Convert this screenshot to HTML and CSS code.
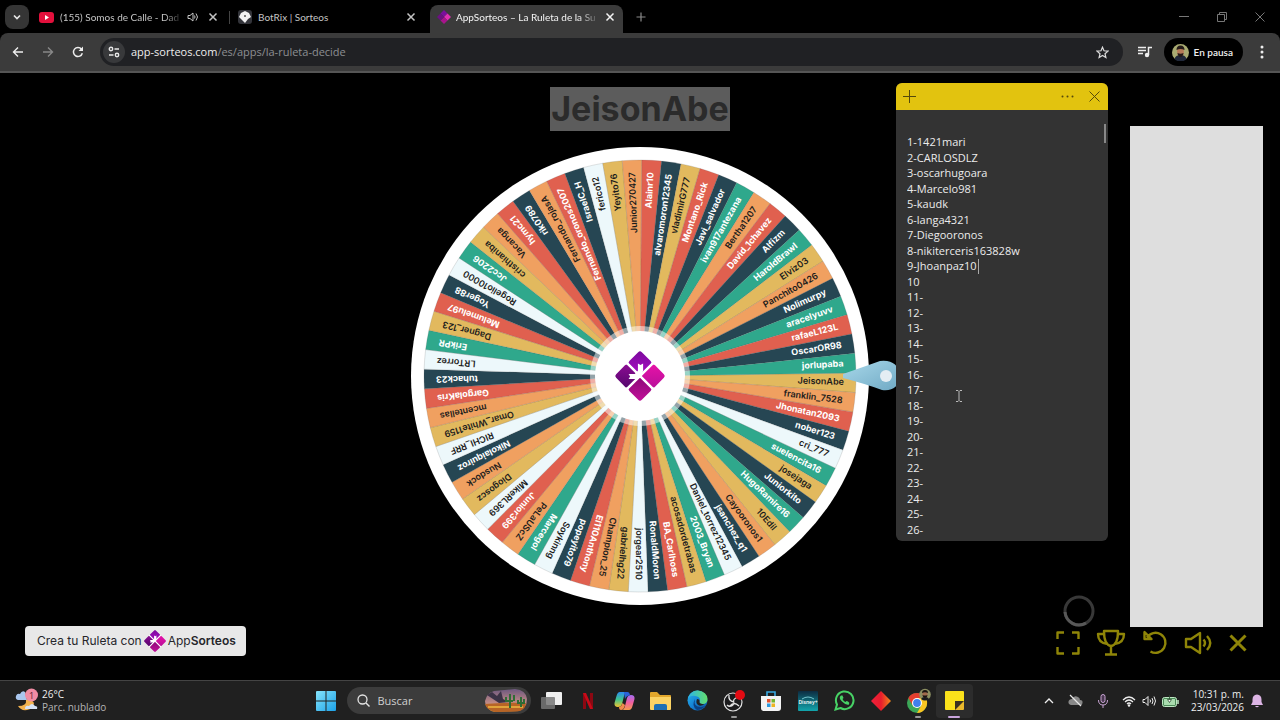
FILE: index.html
```html
<!DOCTYPE html>
<html lang="es">
<head>
<meta charset="utf-8">
<title>AppSorteos – La Ruleta de la Suerte</title>
<link rel="stylesheet" href="styles.css">
</head>
<body>
<svg class="defs" aria-hidden="true">
  <defs>
    <linearGradient id="lg-top" x1="0" y1="0" x2="1" y2="1"><stop offset="0" stop-color="#7a0a9c"/><stop offset="1" stop-color="#a90cc4"/></linearGradient>
    <linearGradient id="lg-right" x1="0" y1="0" x2="1" y2="1"><stop offset="0" stop-color="#e812a8"/><stop offset="1" stop-color="#b8109a"/></linearGradient>
    <linearGradient id="lg-bot" x1="0" y1="0" x2="1" y2="1"><stop offset="0" stop-color="#8a0a78"/><stop offset="1" stop-color="#c4109a"/></linearGradient>
    <linearGradient id="lg-left" x1="0" y1="0" x2="1" y2="1"><stop offset="0" stop-color="#8d0c94"/><stop offset="1" stop-color="#54076c"/></linearGradient>
    <linearGradient id="win" x1="0" y1="0" x2="1" y2="1"><stop offset="0" stop-color="#86e4fb"/><stop offset="1" stop-color="#1ba1e8"/></linearGradient>
    <linearGradient id="edge" x1="0" y1="0" x2="1" y2="1"><stop offset="0" stop-color="#2ab6ea"/><stop offset=".5" stop-color="#1583d6"/><stop offset="1" stop-color="#0d4f9c"/></linearGradient>
    <linearGradient id="edge2" x1="0" y1="0" x2="1" y2="0"><stop offset="0" stop-color="#2cb4e8"/><stop offset="1" stop-color="#63df6c"/></linearGradient>
    <linearGradient id="cop1" x1="0" y1="0" x2="0" y2="1"><stop offset="0" stop-color="#2b8cf0"/><stop offset=".5" stop-color="#3fc48d"/><stop offset="1" stop-color="#f2c230"/></linearGradient>
    <linearGradient id="cop2" x1="0" y1="0" x2="0" y2="1"><stop offset="0" stop-color="#a46cf2"/><stop offset=".5" stop-color="#f05fa0"/><stop offset="1" stop-color="#f59a4c"/></linearGradient>
    <linearGradient id="disney" x1="0" y1="0" x2="0" y2="1"><stop offset="0" stop-color="#0d2c42"/><stop offset="1" stop-color="#12a5ac"/></linearGradient>
    <linearGradient id="redd" x1="0" y1="0" x2="1" y2="0"><stop offset="0" stop-color="#f0213c"/><stop offset=".5" stop-color="#e81c2c"/><stop offset="1" stop-color="#f08a1c"/></linearGradient>
    <linearGradient id="dusk" x1="0" y1="0" x2="0" y2="1"><stop offset="0" stop-color="#6d587f"/><stop offset=".6" stop-color="#c08a86"/><stop offset="1" stop-color="#d79638"/></linearGradient>
    <linearGradient id="ptr" x1="0" y1="0" x2="1" y2="1"><stop offset="0" stop-color="#a9d8ea"/><stop offset="1" stop-color="#6fa9c4"/></linearGradient>
    <symbol id="logo" viewBox="-26 -26 52 52">
      <g transform="rotate(45)">
        <rect x="-17.500" y="-17.500" width="17" height="17" rx="2.500" fill="url(#lg-top)"/>
        <rect x=".500" y="-17.500" width="17" height="17" rx="2.500" fill="url(#lg-right)"/>
        <rect x=".500" y=".500" width="17" height="17" rx="2.500" fill="url(#lg-bot)"/>
        <rect x="-17.500" y=".500" width="17" height="17" rx="2.500" fill="url(#lg-left)"/>
      </g>
      <path d="M-12.500-12.500 12.500 12.500M-12.500 12.500 12.500-12.500" stroke="#fff" stroke-width="2.400"/>
      <path d="M-2-12 .500-10.500 3-12V-5L1 0-4 3H-11L-9.500 .500-11-2H-5L-2-5Z" fill="#fff"/>
    </symbol>
    <symbol id="x" viewBox="0 0 10 10"><path d="M1.500 1.500 8.500 8.500M8.500 1.500 1.500 8.500" fill="none" stroke="currentColor" stroke-width="1.500"/></symbol>
  </defs>
</svg>

<header class="tabs">
  <button class="tab-menu" aria-label="Buscar pestañas"><svg width="10" height="10" viewBox="0 0 10 10"><path d="M2 3.500 5 6.500 8 3.500" fill="none" stroke="#e6e6e6" stroke-width="1.700"/></svg></button>
  <div class="tab tab-first">
    <svg width="15" height="11" viewBox="0 0 15 11"><rect width="15" height="11" rx="3" fill="#e3103c"/><path d="M6 3v5l4-2.500z" fill="#fff"/></svg>
    <span class="tab-title">(155) Somos de Calle - Dad</span>
    <button class="ico" aria-label="Silenciar"><svg width="12" height="12" viewBox="0 0 12 12"><path d="M1 4.500h2l3-2.500v8l-3-2.500H1z" fill="none" stroke="currentColor"/><path d="M7.500 4.500q1 1.500 0 3M9 2.500q3 3.500 0 7" fill="none" stroke="currentColor"/></svg></button>
    <button class="ico" aria-label="Cerrar"><svg width="10" height="10"><use href="#x"/></svg></button>
  </div>
  <div class="tab tab-second">
    <svg width="14" height="14" viewBox="0 0 14 14"><rect width="14" height="14" rx="3" fill="#33343a"/><path d="M3 3 7 1l4 2 2 4-3 2-3 4-4-4-2-2z" fill="#f3f3f3"/><circle cx="7" cy="6" r="1" fill="#555"/></svg>
    <span class="tab-title">BotRix | Sorteos</span>
    <button class="ico" aria-label="Cerrar"><svg width="10" height="10"><use href="#x"/></svg></button>
  </div>
  <div class="tab tab-active">
    <svg width="14" height="14" viewBox="0 0 14 14"><path d="M7 0l3.500 3.500L7 7 3.500 3.500z" fill="#7a0f9c"/><path d="M10.500 3.500 14 7l-3.500 3.500L7 7z" fill="#df30b4"/><path d="M7 7l3.500 3.500L7 14l-3.500-3.500z" fill="#a8148c"/><path d="M3.500 3.500 7 7l-3.500 3.500L0 7z" fill="#6d1083"/></svg>
    <span class="tab-title">AppSorteos – La Ruleta de la Su</span>
    <button class="ico" aria-label="Cerrar"><svg width="10" height="10"><use href="#x"/></svg></button>
  </div>
  <button class="ico new-tab" aria-label="Nueva pestaña"><svg width="10" height="10" viewBox="0 0 10 10"><path d="M5 .500v9M.500 5h9" stroke="#8a8a8a" stroke-width="1.200"/></svg></button>
  <div class="window-buttons">
    <button class="ico" aria-label="Minimizar"><svg width="10" height="10" viewBox="0 0 10 10"><path d="M0 4.500h10" stroke="#777"/></svg></button>
    <button class="ico" aria-label="Restaurar"><svg width="10" height="10" viewBox="0 0 10 10"><path d="M.500 2.500h7v7h-7zM2.500 2V.500h7v7H8" fill="none" stroke="#777"/></svg></button>
    <button class="ico" aria-label="Cerrar ventana"><svg width="10" height="10" viewBox="0 0 10 10"><path d="M.500.500l9 9M9.500.500l-9 9" stroke="#777"/></svg></button>
  </div>
</header>

<nav class="toolbar">
  <button class="ico nav" aria-label="Atrás"><svg width="12" height="12" viewBox="0 0 12 12"><path d="M11 6H2M6 1.500 1.500 6 6 10.500" fill="none" stroke="#eee" stroke-width="1.400"/></svg></button>
  <button class="ico nav" aria-label="Adelante"><svg width="12" height="12" viewBox="0 0 12 12"><path d="M1 6h9M6 1.500 10.500 6 6 10.500" fill="none" stroke="#888" stroke-width="1.400"/></svg></button>
  <button class="ico nav" aria-label="Recargar"><svg width="12" height="12" viewBox="0 0 12 12"><path d="M10.300 7.200A4.500 4.500 0 1 1 9.500 3.200" fill="none" stroke="#eee" stroke-width="1.500"/><path d="M11 .500V5H6.500z" fill="#eee"/></svg></button>
  <div class="omnibox">
    <button class="site-info" aria-label="Información del sitio"><svg width="12" height="12" viewBox="0 0 12 12"><g fill="none" stroke="#e8e8e8" stroke-width="1.400"><circle cx="3" cy="3" r="1.700"/><path d="M6.500 3H11M1 9h4.500"/><circle cx="9" cy="9" r="1.700"/></g></svg></button>
    <a class="url" href="#"><b>app-sorteos.com</b>/es/apps/la-ruleta-decide</a>
    <button class="ico" aria-label="Favorito"><svg width="13" height="13" viewBox="0 0 13 13"><path d="M6.500 1.200 8 4.800l4 .300-3 2.600.900 3.900-3.400-2.100-3.400 2.100.900-3.900-3-2.600 4-.300z" fill="none" stroke="#ddd" stroke-width="1.200"/></svg></button>
  </div>
  <button class="ico media" aria-label="Multimedia"><svg width="14" height="12" viewBox="0 0 14 12"><path d="M0 1.500h8M0 4.500h8M0 7.500h5" stroke="#eee" stroke-width="1.500"/><path d="M10.500 9V1.500H14" fill="none" stroke="#eee" stroke-width="1.500"/><circle cx="9" cy="9" r="2.200" fill="#eee"/></svg></button>
  <button class="profile"><svg width="17" height="17" viewBox="0 0 17 17"><circle cx="8.500" cy="8.500" r="8.500" fill="#a9ab72"/><path d="M2.500 15q1-4 6-4t6 4a8.500 8.500 0 0 1-12 0" fill="#20283a"/><ellipse cx="8.500" cy="7.500" rx="3.400" ry="4.500" fill="#b57a58"/><path d="M4.500 6q0-4.500 4-4.500T12.500 6q-4-2-8 0M5.500 9q3 1.500 6 0-.500 4-3 4t-3-4" fill="#241a18"/></svg>En pausa</button>
  <button class="ico dots" aria-label="Menú"><svg width="4" height="14" viewBox="0 0 4 14" fill="#eee"><circle cx="2" cy="2" r="1.500"/><circle cx="2" cy="7" r="1.500"/><circle cx="2" cy="12" r="1.500"/></svg></button>
</nav>

<main class="stage">
  <div class="side-left">
    <a class="brand" href="#"><span>Crea tu Ruleta con</span><svg width="24" height="24"><use href="#logo"/></svg><span>App<b>Sorteos</b></span></a>
  </div>
  <section class="center">
    <h1>JeisonAbe</h1>
    <svg class="wheel" viewBox="-230 -230 460 460" role="img" aria-label="Ruleta">
      <circle r="229" fill="#fff"/>
      <g id="slices"></g>
      <circle r="47" fill="none" stroke="#fff" stroke-opacity=".5" stroke-width="6"/>
      <circle r="45" fill="#fff"/>
      <use href="#logo" x="-27" y="-27" width="54" height="54"/>
      <path d="M203-2Q226-10 240-15Q258-17 260 0Q258 16 242 14Q226 8 203 2Z" fill="url(#ptr)"/>
      <circle cx="246" cy="0" r="6" fill="#e4edf3"/>
    </svg>
  </section>
  <aside class="side-right">
    <div class="panel-row">
      <svg width="32" height="32" viewBox="0 0 32 32"><circle cx="16" cy="16" r="14" fill="none" stroke="#383838" stroke-width="3"/><path d="M2 17A14 14 0 0 0 23 28" fill="none" stroke="#585858" stroke-width="3"/></svg>
      <div class="blank-panel"></div>
    </div>
    <div class="tools">
      <button class="ico" aria-label="Pantalla completa"><svg width="24" height="24" viewBox="0 0 24 24"><path d="M1.500 8V1.500H8M16 1.500h6.500V8M22.500 16v6.500H16M8 22.500H1.500V16" /></svg></button>
      <button class="ico" aria-label="Ganadores"><svg width="30" height="28" viewBox="0 0 30 28"><path d="M8 2h14q0 14-7 15Q8 16 8 2zM15 17v8M9 25.500h12M8 5H2q0 9 9.500 10M22 5h6q0 9-9.500 10"/></svg></button>
      <button class="ico" aria-label="Reiniciar"><svg width="26" height="26" viewBox="0 0 26 26"><path d="M8.500 21.500A10 10 0 1 0 5 7.500M2.500 2v7h7zM3 9l5-1"/></svg></button>
      <button class="ico" aria-label="Sonido"><svg width="28" height="24" viewBox="0 0 28 24"><path d="M2 8h5l9-6v20l-9-6H2zM19.500 8.500q3 3.500 0 7M23 5q6.500 7 0 14"/></svg></button>
      <button class="ico" aria-label="Cerrar ruleta"><svg class="bold" width="20" height="20" viewBox="0 0 20 20"><path d="M2.500 2.500l15 15M17.500 2.500l-15 15"/></svg></button>
    </div>
  </aside>

  <div class="note">
    <div class="note-bar">
      <button class="ico" aria-label="Nueva nota"><svg width="13" height="13" viewBox="0 0 13 13"><path d="M6.500 0v13M0 6.500h13" stroke="#54490c"/></svg></button>
      <button class="ico note-menu" aria-label="Menú de nota"><svg width="13" height="3" viewBox="0 0 13 3" fill="#54490c"><circle cx="1.500" cy="1.500" r="1"/><circle cx="6.500" cy="1.500" r="1"/><circle cx="11.500" cy="1.500" r="1"/></svg></button>
      <button class="ico" aria-label="Cerrar nota"><svg width="11" height="11" viewBox="0 0 11 11"><path d="M.500.500l10 10M10.500.500l-10 10" stroke="#54490c"/></svg></button>
    </div>
    <textarea class="note-text" aria-label="Nota" spellcheck="false">1-1421mari
2-CARLOSDLZ
3-oscarhugoara
4-Marcelo981
5-kaudk
6-langa4321
7-Diegooronos
8-nikiterceris163828w
9-Jhoanpaz10
10
11-
12-
13-
14-
15-
16-
17-
18-
19-
20-
21-
22-
23-
24-
25-
26-</textarea>
    <span class="note-scroll"></span>
    <span class="note-caret"></span>
    <svg class="cursor" width="8" height="12" viewBox="0 0 8 12"><path d="M1 .500h2l1 1 1-1h2M1 11.500h2l1-1 1 1h2M4 1.500v9" fill="none" stroke="#bbb"/></svg>
  </div>
</main>

<footer class="taskbar">
  <button class="weather">
    <svg width="24" height="26" viewBox="0 0 24 26"><path d="M3 12q-3-1-2-4t4-2q2-4 5-2l2 8z" fill="#a9c6ee"/><path d="M11 12q1 6-8 6 3 5 9 4t7-7q-3-5-8-3" fill="#f2b24e"/><path d="M10 21q0-4 4-3 3-4 6 0 3 0 2 3z" fill="#d5e2f4"/><circle cx="16.500" cy="7" r="6.500" fill="#f08ca4"/><text x="16.500" y="10.500" class="badge-num">1</text></svg>
    <span class="weather-text"><span>26°C</span><span>Parc. nublado</span></span>
  </button>
  <div class="task-center">
    <button class="start" aria-label="Inicio"><svg width="20" height="20" viewBox="0 0 20 20" fill="url(#win)"><path d="M0 1q0-1 1-1h8.500v9.500H0zM10.500 0H19q1 0 1 1v8.500h-9.500zM0 10.500h9.500V20H1q-1 0-1-1zM10.500 10.500H20V19q0 1-1 1h-8.500z"/></svg></button>
    <label class="search">
      <svg width="13" height="13" viewBox="0 0 13 13"><circle cx="5.500" cy="5.500" r="4.500" fill="none" stroke="#e4e4e4" stroke-width="1.300"/><path d="M9 9l3.500 3.500" stroke="#e4e4e4" stroke-width="1.400"/></svg>
      <input type="text" placeholder="Buscar" aria-label="Buscar">
      <svg width="42" height="23" viewBox="0 0 42 23"><path d="M9 2 30 0q11 1 12 10 0 10-10 12L10 23Q0 21 0 12 2 4 9 2z" fill="url(#dusk)"/><path d="M2 6l5-3 5 4 4-5 2 8 6 3-10 1z" fill="#3b3246"/><path d="M0 15q20-2 41-1-1 8-9 8.500L10 23Q2 21 0 15" fill="#b76426"/><path d="M3 18h35" stroke="#e0a33a" stroke-width="2"/><path d="M25 19V5M21 8v4h7M29 6v6M36 18V8M33 11v3h6v-4" fill="none" stroke="#2f6b35" stroke-width="2"/></svg>
    </label>
    <div class="apps">
      <button aria-label="Vista de tareas"><svg width="22" height="20" viewBox="0 0 22 20"><rect x="6" y="1" width="16" height="13" rx="1" fill="#efefef"/><rect x="1" y="6" width="14" height="12" rx="1" fill="#777" fill-opacity=".85"/></svg></button>
      <button aria-label="Netflix"><svg width="10" height="16" viewBox="0 0 10 16"><path d="M0 0h3v16H0zM7 0h3v16H7z" fill="#8c0812"/><path d="M0 0h3l7 16H7z" fill="#c80a18"/></svg></button>
      <button aria-label="Copilot"><svg width="21" height="20" viewBox="0 0 21 20"><path d="M6 1h7q-2 0-3 4L8 13q-1 3-4 3-4 0-3.500-4l2-7Q3.500 1 6 1" fill="url(#cop1)"/><path d="M15 19H8q2 0 3-4l2-8q1-3 4-3 4 0 3.500 4l-2 7q-1 4-3.500 4" fill="url(#cop2)"/><path d="M10 1h3.500q2 0 2.500 3.200-4 .800-5 3.800z" fill="#2a62d8"/><path d="M5 16q3-1 3.500-4L11 14q-1 5-4 5-2 0-2-3" fill="#f08a4c"/></svg></button>
      <button aria-label="Explorador"><svg width="22" height="20" viewBox="0 0 22 20"><path d="M0 2q0-1 1-1h6l3 3h10q1 0 1 1v13H0z" fill="#e2a72c"/><path d="M0 6h21v12q0 1-1 1H1q-1 0-1-1z" fill="#fbd364"/><path d="M4 15q0-2 2-2h9q2 0 2 2v4H4z" fill="#1d70b4"/></svg></button>
      <button aria-label="Edge"><svg width="21" height="21" viewBox="0 0 21 21"><circle cx="10.500" cy="10.500" r="10" fill="url(#edge)"/><path d="M1 8Q4 0 11 .500q9 1 9.500 8.500 0 5-5 5-4 0-3-2 2-5-4-6Q4 5 1 8" fill="url(#edge2)"/><path d="M8 9q-2 8 6 8 3 0 5-2-4 5-9 5-6-4-2-11" fill="#0b4184"/><path d="M10 9q3 0 2.500 3 0 2 5 2.300-4 2.700-7 .200-2-2-.500-5.500" fill="#232323"/></svg></button>
      <button class="running" aria-label="OBS"><svg width="24" height="22" viewBox="0 0 24 22"><circle cx="11" cy="12" r="9" fill="#1c1c1e" stroke="#e2e2e2" stroke-width="1.200"/><path d="M7 5q-1 6 5 7M16 7q-6 2-4 6M17 16q-5-5-9 0M5 15q3 3 7-1" fill="none" stroke="#e2e2e2" stroke-width="1.300"/><circle cx="18" cy="5" r="5" fill="#e30b13"/></svg></button>
      <button aria-label="Store"><svg width="20" height="22" viewBox="0 0 20 22"><path d="M6 7V2h8v5" fill="none" stroke="#37a8e0" stroke-width="1.600"/><path d="M0 6h20v12q0 3-3 3H3q-3 0-3-3z" fill="#f4f4f4"/><path d="M6 9h3.500v3.500H6z" fill="#e4502c"/><path d="M10.500 9H14v3.500h-3.500z" fill="#72b52e"/><path d="M6 13.500h3.500V17H6z" fill="#2c9be0"/><path d="M10.500 13.500H14V17h-3.500z" fill="#eeb420"/></svg></button>
      <button aria-label="Disney+"><svg width="20" height="20" viewBox="0 0 20 20"><rect width="20" height="20" rx="1" fill="url(#disney)"/><path d="M4 8q6-4 12 0" fill="none" stroke="#8fdfe8" stroke-width=".800"/><text x="10" y="13" class="disney-text">Disney+</text></svg></button>
      <button aria-label="WhatsApp"><svg width="21" height="21" viewBox="0 0 21 21"><path d="M1.500 19.500 3 14.500A8.800 8.800 0 1 1 6.500 18z" fill="none" stroke="#47d265" stroke-width="2"/><path d="M7 5.500q-3 2 1 6t7 3q1-2-1-3l-1.500-.500-1 1q-2-.500-3-3l1-1L8.500 5.500z" fill="#47d265"/></svg></button>
      <button aria-label="AnyDesk"><svg width="20" height="20" viewBox="0 0 20 20"><path d="M10 0 20 10 10 20 0 10z" fill="url(#redd)"/></svg></button>
      <button class="running" aria-label="Chrome"><svg width="26" height="26" viewBox="0 0 26 26"><circle cx="12" cy="15" r="10" fill="#3ba757"/><path d="M3.300 10A10 10 0 0 1 20.700 10H12L7.700 17.500z" fill="#e33e30"/><path d="M20.700 10A10 10 0 0 1 12 25l4.300-7.500L12 10z" fill="#f9c521"/><circle cx="12" cy="15" r="5" fill="#fff"/><circle cx="12" cy="15" r="3.900" fill="#3f80ee"/><circle cx="20" cy="6.500" r="5.800" fill="#8c8f62"/><path d="M16 11q1-2 4-2t4 2q-4 3-8 0" fill="#1a1a1e"/><ellipse cx="20" cy="6" rx="2.600" ry="3.400" fill="#a0694c"/><path d="M17 5q0-3 3-3t3 3q-3-1.500-6 0M17.500 7q2.500 1 5 0-.500 3-2.500 3t-2.500-3" fill="#1a1412"/></svg></button>
      <button class="running current" aria-label="Notas rápidas"><svg width="19" height="19" viewBox="0 0 19 19"><path d="M1 0h17q1 0 1 1v9l-9 9H1q-1 0-1-1V1q0-1 1-1" fill="#fbe21b"/><path d="M10 10h9v8q0 1-1 1h-8z" fill="#3a3220"/><path d="M19 10v8q0 1-1 1h-8z" fill="#eab92c"/></svg></button>
    </div>
  </div>
  <div class="tray">
    <button class="ico" aria-label="Mostrar ocultos"><svg width="10" height="10" viewBox="0 0 10 10"><path d="M1 7l4-4 4 4" fill="none" stroke="#eee" stroke-width="1.300"/></svg></button>
    <button class="ico" aria-label="OneDrive"><svg width="15" height="13" viewBox="0 0 15 13"><path d="M3 11q-3-1-2.500-3.500T4 5q2-4 6-2 2 1 2 3 3 0 2.500 3T12 11z" fill="#888"/><path d="M2 1l11 11" stroke="#e6e6e6" stroke-width="1.200"/></svg></button>
    <button class="ico mic" aria-label="Micrófono"><svg width="10" height="14" viewBox="0 0 10 14"><rect x="3" y=".500" width="4" height="8" rx="2" fill="#4a3850" stroke="#c9a4d4"/><path d="M.500 6q0 5 4.500 5t4.500-5M5 11v3" fill="none" stroke="#c9a4d4"/></svg></button>
    <button class="status" aria-label="Red, volumen y batería">
      <svg width="14" height="12" viewBox="0 0 14 12"><path d="M1 5q6-6 12 0M3 7q4-4 8 0M5 9q2-2 4 0" fill="none" stroke="#eee" stroke-width="1.200"/><circle cx="7" cy="10.500" r="1.200" fill="#eee"/></svg>
      <svg width="14" height="12" viewBox="0 0 14 12"><path d="M1 4.500h2l3-3v9l-3-3H1z" fill="none" stroke="#eee"/><path d="M8 4.500q1 1.500 0 3M10 3q2 3 0 6M12 1.500q3 4.500 0 9" fill="none" stroke="#eee"/></svg>
      <svg width="17" height="12" viewBox="0 0 17 12"><rect x=".500" y="2.500" width="14" height="9" rx="2" fill="#4c8a58" stroke="#bfe8c4"/><rect x="2" y="4" width="11" height="6" fill="#a9dcae"/><path d="M16 5v4" stroke="#bfe8c4" stroke-width="1.500"/><path d="M7.500 0v4M5.500 4.500h4l-2 3z" fill="#fff" stroke="#29492e" stroke-width=".800"/></svg>
    </button>
    <time class="clock"><span>10:31 p. m.</span><span>23/03/2026</span></time>
    <button class="ico" aria-label="Notificaciones"><svg width="12" height="14" viewBox="0 0 12 14"><path d="M6 .500q4.500.500 4.500 5V8l1.500 3H0l1.500-3V5.500Q1.500 1 6 .500M4 12h4q-2 2.500-4 0" fill="#dcb4e4"/></svg></button>
  </div>
</footer>
<script src="wheel.js"></script>
</body>
</html>
```

FILE: styles.css
```css
* { box-sizing: border-box; }
html, body { height: 100%; }
body {
  margin: 0;
  display: flex;
  flex-direction: column;
  overflow: hidden;
  background: #000;
  color: #e4e4e4;
  font: 11px/16px "Open Sans", "Noto Sans", sans-serif;
}
button {
  margin: 0;
  padding: 0;
  border: 0;
  background: none;
  color: inherit;
  font: inherit;
  display: flex;
  align-items: center;
  justify-content: center;
}
svg { display: block; flex: none; }
a { color: inherit; text-decoration: none; }
.defs { position: absolute; width: 0; height: 0; }
.ico { flex: none; width: 20px; height: 20px; }

/* tab strip */
.tabs { display: flex; align-items: center; height: 33px; flex: none; padding-left: 5px; font-family: Lato, "Open Sans", sans-serif; font-size: 10px; }
.tab-menu { width: 24px; height: 24px; border-radius: 8px; background: #353535; }
.tab { display: flex; align-items: center; height: 28px; align-self: flex-end; padding-bottom: 4px; color: #c4c4c4; }
.tab-title { flex: 1; min-width: 0; margin-left: 6px; white-space: nowrap; }
.tab-first .tab-title, .tab-active .tab-title {
  -webkit-mask-image: linear-gradient(90deg, #000 85%, transparent);
  mask-image: linear-gradient(90deg, #000 85%, transparent);
}
.tab-first { width: 184px; margin-left: 10px; }
.tab-second { width: 192px; margin-left: 15px; padding-right: 9px; position: relative; }
.tab-second::before { content: ""; position: absolute; left: -9px; top: 6px; width: 1px; height: 13px; background: #444; }
.tab-active {
  width: 193px;
  padding: 0 3px 4px 7px;
  border-radius: 8px 8px 0 0;
  background: #3b3b3b;
  color: #f4f4f4;
}
.tab-active .tab-title { margin-left: 5px; }
.new-tab { margin-left: 8px; }
.window-buttons { display: flex; gap: 18px; margin-left: auto; padding-right: 10px; }

/* address bar */
.toolbar {
  display: flex;
  align-items: center;
  flex: none;
  height: 40px;
  padding: 0 8px;
  background: #3b3b3b;
  border-bottom: 2px solid #555;
  border-radius: 8px 8px 0 0;
}
.nav { margin-right: 10px; }
.omnibox {
  flex: 1;
  display: flex;
  align-items: center;
  height: 28px;
  margin-left: 2px;
  padding: 0 10px 0 3px;
  border-radius: 14px;
  background: #202124;
}
.site-info { width: 22px; height: 22px; border-radius: 50%; background: #38393b; }
.url { flex: 1; margin-left: 6px; color: #8d8f92; }
.url b { color: #eee; font-weight: 400; }
.media { margin: 0 9px 0 12px; }
.profile { height: 28px; padding: 0 10px 0 8px; gap: 5px; border-radius: 14px; background: #000; color: #f0f0f0; font-family: Lato, "Open Sans", sans-serif; font-size: 10px; font-weight: 600; }
.dots { margin-left: 9px; }

/* wheel page */
.stage {
  position: relative;
  flex: 1;
  min-height: 0;
  display: grid;
  grid-template-columns: 1fr auto 1fr;
}
.side-left { display: flex; align-items: flex-end; padding: 0 0 24px 25px; }
.brand {
  display: flex;
  align-items: center;
  height: 30px;
  padding: 0 10px 0 12px;
  gap: 1px;
  border-radius: 4px;
  background: #e8e8e8;
  color: #26262b;
  font-family: Inter, sans-serif;
  font-size: 12px;
}
.brand b { font-weight: 600; }
.center { display: flex; flex-direction: column; align-items: center; padding-top: 14px; }
h1 {
  margin: 0 0 15px;
  padding: 0 1px;
  background: #5c5c5c;
  color: #2b2b2b;
  font: 700 34px/44px Inter, sans-serif;
}
.wheel { width: 460px; height: 460px; overflow: visible; }
.wheel text { font-family: Inter, sans-serif; font-size: 9px; text-anchor: end; dominant-baseline: central; }
.on-dark { fill: #fff; font-weight: 700; }
.on-light { fill: #1c1c1c; font-weight: 600; }
.side-right { display: flex; flex-direction: column; align-items: flex-end; padding: 53px 17px 22px 0; }
.panel-row { flex: 1; display: flex; align-items: flex-end; gap: 35px; }
.blank-panel { align-self: stretch; width: 133px; background: #dedede; }
.tools { display: flex; align-items: center; gap: 16px; height: 31px; margin-right: 15px; }
.tools .ico { width: auto; height: 28px; }
.tools path { fill: none; stroke: #8f8508; stroke-width: 2.4; stroke-linejoin: round; }
.tools .bold path { stroke-width: 3; }

/* sticky note window */
.note {
  position: absolute;
  left: 70%;
  top: 10px;
  width: 212px;
  height: 458px;
  display: flex;
  flex-direction: column;
  border-radius: 6px;
  overflow: hidden;
  background: #333;
}
.note-bar { display: flex; align-items: center; height: 27px; padding: 0 4px 0 3px; background: #e2c30f; }
.note-menu { margin: 0 7px 0 auto; }
.note-text {
  flex: 1;
  margin: 24px 10px 6px 11px;
  padding: 0;
  border: 0;
  outline: 0;
  resize: none;
  overflow: hidden;
  background: none;
  color: #ececec;
  font: 11px/1.41 "Open Sans", "Noto Sans", sans-serif;
}
.note-scroll { position: absolute; right: 2px; top: 41px; width: 2px; height: 19px; background: #888; }
.note-caret { position: absolute; left: 82px; top: 176px; width: 1px; height: 15px; background: #aaa; }
.cursor { position: absolute; left: 59px; top: 307px; }

/* taskbar */
.taskbar {
  display: grid;
  grid-template-columns: 1fr auto 1fr;
  align-items: center;
  flex: none;
  height: 40px;
  background: #202020;
  border-top: 1px solid #444;
}
.weather { justify-self: start; padding-left: 15px; gap: 3px; }
.weather-text { display: flex; flex-direction: column; align-items: flex-start; line-height: 13px; color: #b4b4b4; font-size: 10px; }
.weather-text span:first-child { color: #eee; }
.badge-num { fill: #5c1c30; font-size: 9px; text-anchor: middle; }
.task-center { display: flex; align-items: center; height: 39px; }
.start { width: 36px; height: 36px; }
.search {
  display: flex;
  align-items: center;
  width: 184px;
  height: 27px;
  margin: 0 2px 0 3px;
  padding: 0 4px 0 10px;
  gap: 8px;
  border-radius: 14px;
  background: #3c3c3c;
}
.search input { flex: 1; min-width: 0; padding: 0; border: 0; outline: 0; background: none; color: #eee; font: 11px/16px "Open Sans", sans-serif; }
.search input::placeholder { color: #cfcfcf; opacity: 1; }
.apps { display: flex; width: 440px; }
.apps button { flex: 1; height: 34px; position: relative; border-radius: 4px; }
.apps .current { background: #2c2c2c; }
.running::after { content: ""; position: absolute; bottom: 0; left: 50%; width: 6px; height: 2px; margin-left: -3px; border-radius: 1px; background: #999; }
.current::after { width: 12px; margin-left: -6px; background: #c9a4dc; }
.disney-text { fill: #fff; font-size: 5px; font-weight: 600; text-anchor: middle; }
.tray { display: flex; align-items: center; justify-content: flex-end; gap: 7px; padding-right: 17px; }
.mic { margin-right: 2px; }
.status { gap: 6px; }
.clock { display: flex; flex-direction: column; align-items: flex-end; margin-left: 5px; line-height: 13px; color: #eee; font-size: 10px; }
.tray .clock + .ico { width: 12px; }
```

FILE: wheel.js
```js
const COLORS = { Y: "#e2b95e", O: "#f0a060", R: "#e0604f", D: "#264653", W: "#edf8fb", G: "#2fa88c" };
const NAMES = `JeisonAbe Y,franklin_7528 O,Jhonatan2093 R,nober123 D,cri_777 W,suelencita16 G,josejaga Y,Juniorkito D,
HugoRamire16 G,10Edil Y,Cayooronos1 O,jsanchez_q1 D,Daniel_torrez12345 W,2003_Bryan G,acosadordetrabas Y,
BA_Carlhoss R,RonaldMoron D,jorgear2510 W,gabrielhg22 Y,Champion_25 O,El110Anthony R,popeyito79 D,Soykinng W,
Marcegol G,PeLaUScZ O,Junior399 R,MikeRL369 W,Diogoscz Y,Nusdock O,Nikolaiquiroz D,RICHI_RRF W,Omar_White1159 Y,
mcentellas O,GargolaKris R,tuhack23 D,LRTorrez W,ErikPR G,Dagner_123 Y,Melumelu97 R,Yoger88 D,Rogelio10000 W,
Jcc2206 G,cristhianiba Y,Vacanga O,hymc21 R,rik0789 D,Fernando_rojasA O,Fernando_oronos2007 R,IsraelC_H D,
ferico12 W,Yeyito76 Y,Junior270427 O,Alainr10 R,alvaromoron12345 D,vladimirG777 Y,Montano_Rick R,Javi_salvador D,
ivan917antezana G,Bertha1207 O,David_1chavez R,Alfizm D,HaroldBrawl G,Elviz03 Y,Panchito0426 O,Nolimurpy D,
aracelyuvv G,rafaeL123L R,OscarOR98 D,jorlupaba G`.split(",").map(s => s.trim().split(" "));

const RADIUS = 216;
const START = -0.8;
const STEP = 360 / NAMES.length;
const point = deg => {
  const a = deg * Math.PI / 180;
  return (RADIUS * Math.cos(a)).toFixed(2) + " " + (RADIUS * Math.sin(a)).toFixed(2);
};

document.getElementById("slices").innerHTML = NAMES.map(([name, key], i) => {
  const from = START + i * STEP;
  const cls = "RDG".includes(key) ? "on-dark" : "on-light";
  return `<path d="M0 0L${point(from)}A${RADIUS} ${RADIUS} 0 0 1 ${point(from + STEP)}Z" fill="${COLORS[key]}" stroke="#555" stroke-opacity=".35" stroke-width=".5"/>` +
    `<text class="${cls}" x="204" y="-1" transform="rotate(${(from + STEP / 2).toFixed(2)})">${name}</text>`;
}).join("");
```
